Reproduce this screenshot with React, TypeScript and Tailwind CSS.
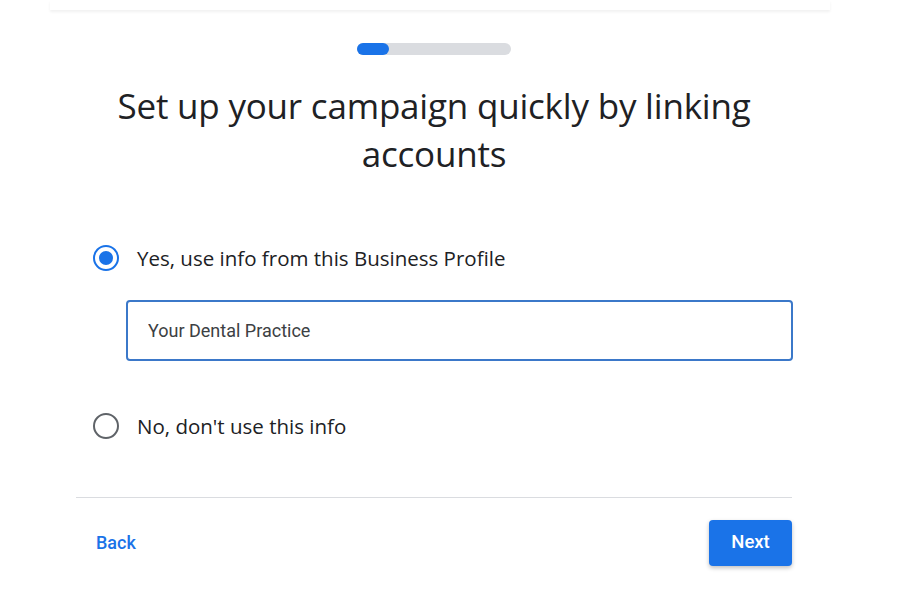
import { useState } from 'react';

const Radio = ({ checked }: { checked: boolean }) => (
  <span
    className={`flex items-center justify-center w-[26px] h-[26px] rounded-full border-2 shrink-0 ${
      checked ? 'border-[#1a73e8]' : 'border-[#5f6368]'
    }`}
  >
    {checked ? <span className="w-[14px] h-[14px] rounded-full bg-[#1a73e8]" /> : null}
  </span>
);

export default function App() {
  const [choice, setChoice] = useState<'yes' | 'no'>('yes');
  const [name, setName] = useState('Your Dental Practice');

  return (
    <div className="w-[900px] h-[600px] bg-white overflow-hidden font-['Roboto','Liberation_Sans',sans-serif]">
      <div className="mx-[50px] w-[780px] h-[10px] shadow-[0_2px_3px_rgba(0,0,0,0.06)]" />

      <div className="flex justify-center pt-[33px]">
        <div className="w-[154px] h-[12px] rounded-full bg-[#dadce0] ml-[-32px]">
          <div className="w-[32px] h-[12px] rounded-full bg-[#1a73e8]" />
        </div>
      </div>

      <div className="ml-[76px] w-[716px]">
        <h1 className="mt-[27px] text-center text-[35px] leading-[48px] text-[#202124] font-['Open_Sans','Liberation_Sans',sans-serif] tracking-[-0.2px]">
          Set up your campaign quickly by linking
          <br />
          accounts
        </h1>

        <div className="mt-[65px] pl-[17px]">
          <button type="button" onClick={() => setChoice('yes')} className="flex items-center gap-[18px]">
            <Radio checked={choice === 'yes'} />
            <span className="text-[20.5px] font-medium text-[#202124] font-['Open_Sans','Liberation_Sans',sans-serif]">
              Yes, use info from this Business Profile
            </span>
          </button>

          <div className="ml-[33px] mt-[26px] w-[667px] h-[61px] rounded-[4px] border-2 border-[#3b78c9] flex items-center px-[20px]">
            <input
              autoFocus
              value={name}
              onChange={(e) => setName(e.target.value)}
              className="w-full outline-none text-[18px] text-[#3c4043] bg-transparent caret-black"
            />
          </div>

          <button type="button" onClick={() => setChoice('no')} className="mt-[50px] flex items-center gap-[18px]">
            <Radio checked={choice === 'no'} />
            <span className="text-[20.5px] font-medium text-[#202124] font-['Open_Sans','Liberation_Sans',sans-serif]">
              No, don't use this info
            </span>
          </button>
        </div>

        <div className="mt-[55px] border-t border-[#dadce0]" />

        <div className="flex items-center justify-between mt-[22px] pl-[20px]">
          <button type="button" className="text-[18px] font-medium text-[#1a73e8]">
            Back
          </button>
          <button
            type="button"
            className="w-[83px] h-[46px] rounded-[4px] bg-[#1a73e8] text-white text-[18.5px] font-medium shadow-[0_2px_4px_rgba(0,0,0,0.25)]"
          >
            Next
          </button>
        </div>
      </div>
    </div>
  );
}
